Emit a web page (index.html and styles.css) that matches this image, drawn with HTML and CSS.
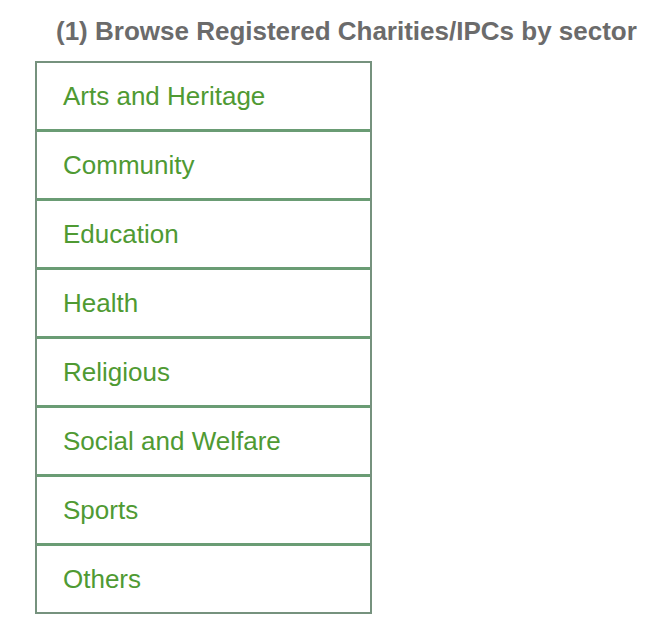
FILE: index.html
```html
<!DOCTYPE html>
<html>
<head>
<meta charset="UTF-8">
<title>Browse by sector</title>
<link rel="stylesheet" href="styles.css">
</head>
<body>
	<div class="sector-browse">
		<h2 class="sector-title">(1) Browse Registered Charities/IPCs by sector</h2>
		<ul class="sector-list">
			<li><a href="#">Arts and Heritage</a></li>
			<li><a href="#">Community</a></li>
			<li><a href="#">Education</a></li>
			<li><a href="#">Health</a></li>
			<li><a href="#">Religious</a></li>
			<li><a href="#">Social and Welfare</a></li>
			<li><a href="#">Sports</a></li>
			<li><a href="#">Others</a></li>
		</ul>
	</div>
</body>
</html>
```

FILE: styles.css
```css
body {
	margin: 0;
	background: #fff;
	font-family: "Liberation Sans", Arial, sans-serif;
}

.sector-browse {
	padding: 14px 0 0 35px;
}

.sector-title {
	margin: 0 0 13px 21px;
	font-size: 26px;
	line-height: 34px;
	font-weight: bold;
	color: #6b6b6b;
	white-space: nowrap;
}

.sector-list {
	list-style: none;
	margin: 0;
	padding: 0;
	width: 333px;
	border: 2px solid #76927e;
}

.sector-list li {
	border-bottom: 3px solid #6a9c74;
}

.sector-list li:last-child {
	border-bottom: none;
}

.sector-list a {
	display: block;
	height: 66px;
	line-height: 66px;
	padding-left: 26px;
	font-size: 26px;
	color: #4f9a33;
	text-decoration: none;
}
```
